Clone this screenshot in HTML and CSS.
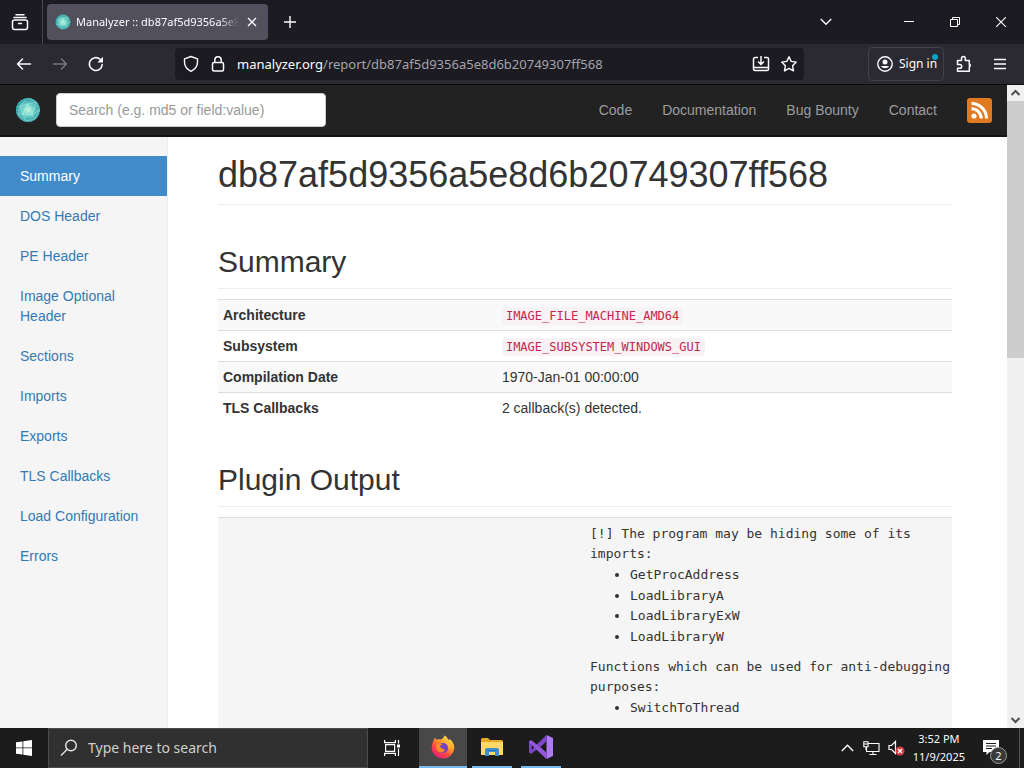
FILE: index.html
```html
<!DOCTYPE html>
<html lang="en">
<head>
<meta charset="utf-8">
<title>Manalyzer :: db87af5d9356a5e8d6b20749307ff568</title>
<link rel="stylesheet" href="styles.css">
</head>
<body>
<svg class="defs" width="0" height="0" aria-hidden="true">
  <defs>
    <radialGradient id="orb"><stop offset="0" stop-color="#c4f5da"/><stop offset=".5" stop-color="#6ad0c8"/><stop offset="1" stop-color="#2f979f"/></radialGradient>
    <symbol id="logo" viewBox="0 0 26 26">
      <circle cx="13" cy="13" r="12" fill="url(#orb)"/>
      <g fill="none" stroke="#d5fff0" stroke-opacity=".45" stroke-width=".8"><path d="M13 1 5 9l-2 8 8 7 9-2 4-9-3-8-8-4M5 9l8-2 8-2M5 9l3 8 3 7M3 17l5 0 9 1 3 4M13 7l4 11 7-5M13 7 8 17M21 5l-4 13"/></g>
      <circle cx="13" cy="13" r="11.500" fill="none" stroke="#52c2c4" stroke-dasharray="2 1.500"/>
    </symbol>
  </defs>
</svg>

<header class="tabs">
  <button class="icon-btn view-btn" aria-label="Firefox View"><svg width="18" height="18" viewBox="0 0 18 18" fill="none" stroke="#fbfbfe" stroke-width="1.500" stroke-linecap="round"><path d="M5 1.800h8M3 4.600h12"/><rect x="1.500" y="7" width="15" height="9.500" rx="2"/><path d="M7.500 10.500h3"/></svg></button>
  <div class="tab">
    <svg width="16" height="16"><use href="#logo"/></svg>
    <span class="tab-title">Manalyzer :: db87af5d9356a5e8</span>
    <button class="icon-btn tab-close" aria-label="Close tab"><svg width="10" height="10" viewBox="0 0 10 10" stroke="#fbfbfe" stroke-width="1.400"><path d="m1 1 8 8M9 1 1 9"/></svg></button>
  </div>
  <button class="icon-btn new-tab" aria-label="New tab"><svg width="12" height="12" viewBox="0 0 12 12" stroke="#fbfbfe" stroke-width="1.400"><path d="M6 0v12M0 6h12"/></svg></button>
  <div class="window-controls">
    <button class="icon-btn all-tabs" aria-label="List all tabs"><svg width="12" height="8" viewBox="0 0 12 8" fill="none" stroke="#fbfbfe" stroke-width="1.400"><path d="m.8 1 5.200 5.200L11.200 1"/></svg></button>
    <button class="icon-btn" aria-label="Minimize"><svg width="10" height="10" viewBox="0 0 10 10" stroke="#fff"><path d="M0 4.500h10"/></svg></button>
    <button class="icon-btn" aria-label="Restore"><svg width="10" height="10" viewBox="0 0 10 10" fill="none" stroke="#fff"><path d="M.5 2.500h7v7h-7zM2.500 2.500v-2h7v7h-2"/></svg></button>
    <button class="icon-btn" aria-label="Close"><svg width="10" height="10" viewBox="0 0 10 10" stroke="#fff" stroke-width="1.100"><path d="m0 0 10 10M10 0 0 10"/></svg></button>
  </div>
</header>

<div class="toolbar">
  <div class="nav-buttons">
    <button class="icon-btn" aria-label="Back"><svg width="16" height="16" viewBox="0 0 16 16" fill="none" stroke="#fbfbfe" stroke-width="1.500" stroke-linecap="round" stroke-linejoin="round"><path d="M14.500 8H1.500M6.500 3 1.500 8l5 5"/></svg></button>
    <button class="icon-btn" aria-label="Forward"><svg width="16" height="16" viewBox="0 0 16 16" fill="none" stroke="#77767e" stroke-width="1.500" stroke-linecap="round" stroke-linejoin="round"><path d="M1.500 8h13M9.500 3l5 5-5 5"/></svg></button>
    <button class="icon-btn" aria-label="Reload"><svg width="16" height="16" viewBox="0 0 16 16"><path d="M14.200 8.500A6.400 6.400 0 1 1 12 3.200" fill="none" stroke="#fbfbfe" stroke-width="1.600" stroke-linecap="round"/><path d="M15 .8v5.700H9.300z" fill="#fbfbfe"/></svg></button>
  </div>
  <div class="url-bar">
    <svg width="16" height="18" viewBox="0 0 16 18" fill="none" stroke="#fbfbfe" stroke-width="1.400" stroke-linejoin="round"><path d="m8 1.500 6.500 2.300v3.400c0 4-2.500 7-6.500 9.100-4-2.100-6.500-5.100-6.500-9.100V3.800z"/></svg>
    <svg width="14" height="18" viewBox="0 0 14 18" fill="none" stroke="#fbfbfe" stroke-width="1.500"><rect x="1.500" y="7.500" width="11" height="8.500" rx="1.500"/><path d="M3.800 7.500V5a3.200 3.200 0 0 1 6.400 0v2.500"/></svg>
    <span class="url"><span class="host">manalyzer.org</span>/report/db87af5d9356a5e8d6b20749307ff568</span>
    <button class="icon-btn" aria-label="Install"><svg width="18" height="16" viewBox="0 0 18 16" fill="none" stroke="#fbfbfe" stroke-width="1.500"><path d="M6 1.500H3A1.500 1.500 0 0 0 1.500 3v10A1.500 1.500 0 0 0 3 14.500h12a1.500 1.500 0 0 0 1.500-1.500V3A1.500 1.500 0 0 0 15 1.500h-3M9 0v8M6 5.500l3 3 3-3M2 11.500h14"/></svg></button>
    <button class="icon-btn" aria-label="Bookmark"><svg width="18" height="18" viewBox="0 0 18 18" fill="none" stroke="#fbfbfe" stroke-width="1.400" stroke-linejoin="round"><path d="m9 1.700 2.200 4.700 5.100.7-3.700 3.600.9 5.200L9 13.400l-4.500 2.500.9-5.200L1.700 7.100l5.100-.7z"/></svg></button>
  </div>
  <div class="tool-actions">
    <button class="sign-in"><svg width="16" height="16" viewBox="0 0 16 16"><circle cx="8" cy="8" r="7.200" fill="none" stroke="#fbfbfe" stroke-width="1.400"/><circle cx="8" cy="6" r="2.500" fill="#fbfbfe"/><path d="M3.800 10h8.400a5 5 0 0 1-8.400 0z" fill="#fbfbfe"/></svg>Sign in<span class="dot"></span></button>
    <button class="icon-btn" aria-label="Extensions"><svg width="16" height="18" viewBox="0 0 16 18" fill="none" stroke="#fbfbfe" stroke-width="1.500" stroke-linejoin="round"><path d="M1.500 8.500V5.500h4V3.400a1.900 1.900 0 0 1 3.800 0v2.100h4v4.200h.9v1.600h-.9v5H1.500v-3h2.300a1.900 1.900 0 0 0 0-3.800H1.500z"/></svg></button>
    <button class="icon-btn" aria-label="Menu"><svg width="12" height="12" viewBox="0 0 12 12" stroke="#fbfbfe" stroke-width="1.300"><path d="M0 1.500h12M0 6h12M0 10.500h12"/></svg></button>
  </div>
</div>

<div class="viewport">
  <div class="page">
    <nav class="navbar">
      <a href="#" class="brand" aria-label="Manalyzer"><svg width="26" height="26"><use href="#logo"/></svg></a>
      <input class="search" type="text" placeholder="Search (e.g. md5 or field:value)" aria-label="Search">
      <div class="nav-links">
        <a href="#">Code</a><a href="#">Documentation</a><a href="#">Bug Bounty</a><a href="#">Contact</a>
        <a href="#" class="rss" aria-label="RSS feed"><svg width="25" height="25" viewBox="0 0 25 25"><rect width="25" height="25" rx="3" fill="#e07a20"/><circle cx="7" cy="18" r="2.600" fill="#fff"/><path d="M4.500 10.700a9.800 9.800 0 0 1 9.800 9.800M4.500 5.500a15 15 0 0 1 15 15" fill="none" stroke="#fff" stroke-width="3"/></svg></a>
      </div>
    </nav>
    <div class="columns">
      <aside class="sidebar">
        <a href="#summary" class="active">Summary</a>
        <a href="#">DOS Header</a>
        <a href="#">PE Header</a>
        <a href="#">Image Optional Header</a>
        <a href="#">Sections</a>
        <a href="#">Imports</a>
        <a href="#">Exports</a>
        <a href="#">TLS Callbacks</a>
        <a href="#">Load Configuration</a>
        <a href="#">Errors</a>
      </aside>
      <main class="report">
        <h1>db87af5d9356a5e8d6b20749307ff568</h1>
        <h2 id="summary">Summary</h2>
        <table class="summary">
          <tr><th scope="row">Architecture</th><td><code>IMAGE_FILE_MACHINE_AMD64</code></td></tr>
          <tr><th scope="row">Subsystem</th><td><code>IMAGE_SUBSYSTEM_WINDOWS_GUI</code></td></tr>
          <tr><th scope="row">Compilation Date</th><td>1970-Jan-01 00:00:00</td></tr>
          <tr><th scope="row">TLS Callbacks</th><td>2 callback(s) detected.</td></tr>
        </table>
        <h2>Plugin Output</h2>
        <table class="plugins">
          <tr><td></td><td>
            <p>[!] The program may be hiding some of its imports:</p>
            <ul><li>GetProcAddress</li><li>LoadLibraryA</li><li>LoadLibraryExW</li><li>LoadLibraryW</li></ul>
            <p>Functions which can be used for anti-debugging purposes:</p>
            <ul><li>SwitchToThread</li></ul>
          </td></tr>
        </table>
      </main>
    </div>
  </div>
  <div class="scrollbar">
    <svg width="17" height="16" viewBox="0 0 17 16" fill="none" stroke="#505050" stroke-width="2"><path d="m4.500 10 4-4 4 4"/></svg>
    <div class="track"><div class="thumb"></div></div>
    <svg width="17" height="16" viewBox="0 0 17 16" fill="none" stroke="#505050" stroke-width="2"><path d="m4.500 6 4 4 4-4"/></svg>
  </div>
</div>

<footer class="taskbar">
  <button class="icon-btn start" aria-label="Start"><svg width="16" height="16" viewBox="0 0 16 16" fill="#fff"><path d="M0 2.300 6.500 1.400v6.100H0zM7.300 1.300 16 0v7.500H7.300zM0 8.300h6.500v6.300L0 13.700zM7.300 8.300H16V16l-8.700-1.300z"/></svg></button>
  <label class="task-search"><svg width="18" height="18" viewBox="0 0 18 18" fill="none" stroke="#e6e6e6" stroke-width="1.400"><circle cx="11" cy="6.500" r="5.300"/><path d="M7.200 10.300 1 16.500"/></svg><input type="text" placeholder="Type here to search" aria-label="Type here to search"></label>
  <button class="icon-btn task-view" aria-label="Task view"><svg width="17" height="16" viewBox="0 0 17 16" fill="none" stroke="#fff" stroke-width="1.200"><path d="M.6 0v2.600h10.800V0M.6 16v-2.600h10.800V16M1.600 4.600h9v6.800h-9zM14.500 0v3.500M14.500 8.500V16"/><path d="M13 4.500h3v3h-3z" fill="#fff" stroke="none"/></svg></button>
  <button class="app current" aria-label="Firefox"><svg width="24" height="24" viewBox="0 0 24 24">
    <defs><linearGradient id="fox" x1=".85" y1=".05" x2=".25" y2=".95"><stop offset="0" stop-color="#ffe94a"/><stop offset=".4" stop-color="#ff9a2b"/><stop offset=".7" stop-color="#ff4645"/><stop offset="1" stop-color="#e51f78"/></linearGradient></defs>
    <path d="M2.500 6c.3-1.800 1-2.800 1.600-3.400.2 1 .8 1.800 1.500 2.200 1.300-.5 2.800-.6 4-.2C11 3.800 13 3 13.500.5c2.500 1.300 3.600 3.500 4.200 4.800.5-.2.700-.8.700-1.500 3.300 2.400 4.900 5.700 4.900 9A11.300 11.300 0 0 1 12 23.500C5.700 23.500.7 18.600.7 12.500c0-2.500.7-4.700 1.800-6.500z" fill="url(#fox)"/>
    <circle cx="12" cy="13" r="5" fill="#7143c8"/><path d="M5.500 9.500c2-1.500 4.800-1.200 6.400.3-1.800 0-2.500.7-2.900 1.500.8 2.500 3.500 2.200 5 3.700-1.500 3-6 3-8 .2-1.100-1.600-1.300-3.900-.5-5.700z" fill="#ff8a26"/><path d="M13 7.500c3.500.5 5.500 3.500 4.500 7 2-1.600 2.500-5 .5-8z" fill="#ffbd35"/></svg></button>
  <button class="app" aria-label="File Explorer"><svg width="22" height="20" viewBox="0 0 22 20"><path d="M0 2.500Q0 1 1.500 1H7l2 2h11.500Q22 3 22 4.500V18H0z" fill="#e9a927"/><path d="M0 5h22v13H0z" fill="#ffd967"/><path d="M4 19v-6q0-2 2-2h10q2 0 2 2v6h-4v-4H8v4z" fill="#3f8fd2"/><path d="M6 13.500h10" stroke="#2670ad"/></svg></button>
  <button class="app" aria-label="Visual Studio"><svg width="24" height="24" viewBox="0 0 24 24"><path d="M17.500 0v24L24 21V3z" fill="#b07af0"/><path d="M17.500 0 7.800 9.500 2.200 5.200 0 6.200v11.600l2.200 1 5.600-4.300L17.500 24v-6.200L11.500 12l6-5.800zM2.700 9l2.800 3-2.800 3z" fill="#7d45c9" fill-rule="evenodd"/><path d="m2.200 5.200 15.300 12.600V24L0 7.400V6.200z" fill="#9259dc"/></svg></button>
  <div class="tray">
    <svg width="13" height="8" viewBox="0 0 13 8" fill="none" stroke="#fff" stroke-width="1.300"><path d="M.8 7 6.500 1.200 12.200 7"/></svg>
    <svg width="17" height="15" viewBox="0 0 17 15" fill="none" stroke="#fff" stroke-width="1.100"><path d="M5 2.500h11v8H3.500V6M6.500 13.500h7M10 10.500v3M.8.800h4.200v5H.8zM.8 3H5M3 6v3"/></svg>
    <svg width="17" height="16" viewBox="0 0 17 16"><path d="M1 5.500h2.500L7.500 1.500v12l-4-4H1z" fill="none" stroke="#fff" stroke-width="1.200"/><circle cx="12" cy="11" r="4.500" fill="#d93a42"/><path d="m10 9 4 4M14 9l-4 4" stroke="#fff" stroke-width="1.400"/></svg>
    <div class="clock"><span>3:52 PM</span><span>11/9/2025</span></div>
    <button class="icon-btn notices" aria-label="Notifications"><svg width="16" height="16" viewBox="0 0 16 16"><path d="M0 0h16v12H6.500L3.500 15v-3H0z" fill="#fff"/><path d="M3 3.500h10M3 6h10M3 8.500h6" stroke="#1c1c1c"/></svg><span class="count">2</span></button>
  </div>
</footer>
</body>
</html>
```
FILE: styles.css
```css
* { box-sizing: border-box; }

body {
  margin: 0;
  height: 100vh;
  display: flex;
  flex-direction: column;
  overflow: hidden;
  font-family: "Liberation Sans", Arial, sans-serif;
  font-size: 14px;
  line-height: 20px;
  color: #333;
}

.defs { position: absolute; }
svg { flex: none; display: block; }
a { text-decoration: none; }
button, input { font: inherit; }

button {
  border: 0;
  padding: 0;
  background: none;
  color: inherit;
}

.icon-btn {
  display: flex;
  align-items: center;
  justify-content: center;
  flex: none;
}

.tabs, .toolbar, .taskbar {
  flex: none;
  display: flex;
  font-family: "Noto Sans", "Open Sans", sans-serif;
  color: #fbfbfe;
}

/* Browser chrome */
.tabs {
  height: 44px;
  align-items: center;
  background: #1c1b22;
}

.view-btn {
  width: 43px;
  height: 44px;
  padding-right: 3px;
  border-right: 1px solid #46454d;
}

.tab {
  width: 221px;
  height: 36px;
  margin: 0 4px;
  padding: 0 8px;
  display: flex;
  align-items: center;
  gap: 5px;
  border-radius: 4px;
  background: #52505d;
  font-size: 11px;
}

.tab-title {
  flex: 1;
  min-width: 0;
  white-space: nowrap;
  mask-image: linear-gradient(to left, transparent, #000 20px);
}

.tab-close { width: 16px; }
.new-tab { width: 36px; height: 36px; }

.window-controls {
  margin-left: auto;
  display: flex;
}

.window-controls .icon-btn { width: 46px; height: 44px; }
.window-controls .all-tabs { width: 36px; margin-right: 42px; }

.toolbar {
  height: 41px;
  align-items: center;
  padding: 0 6px;
  background: #2b2a33;
  border-bottom: 1px solid #0c0c0d;
}

.nav-buttons { display: flex; }
.nav-buttons .icon-btn { width: 36px; height: 32px; }

.url-bar {
  flex: 1;
  min-width: 0;
  height: 32px;
  margin: 0 64px 0 61px;
  padding: 0 6px 0 8px;
  display: flex;
  align-items: center;
  gap: 12px;
  border-radius: 4px;
  background: #1c1b22;
}

.url {
  flex: 1;
  min-width: 0;
  overflow: hidden;
  white-space: nowrap;
  font-size: 13px;
  color: #a4a3aa;
}

.url-bar .icon-btn + .icon-btn { margin-left: -2px; }

.host { color: #fbfbfe; }

.tool-actions { display: flex; align-items: center; }
.tool-actions .icon-btn { width: 36px; height: 32px; }

.sign-in {
  position: relative;
  height: 34px;
  width: 76px;
  margin-right: 2px;
  padding-left: 8px;
  display: flex;
  align-items: center;
  gap: 6px;
  border: 1px solid #42414a;
  border-radius: 4px;
  font-size: 12px;
  white-space: nowrap;
}

.dot {
  position: absolute;
  top: 6px;
  right: 5px;
  width: 6px;
  height: 6px;
  border-radius: 50%;
  background: #00a5c8;
}

/* Web page */
.viewport {
  flex: 1;
  min-height: 0;
  display: flex;
  background: #fff;
}

.page {
  flex: 1;
  min-width: 0;
  display: flex;
  flex-direction: column;
}

.navbar {
  flex: none;
  min-height: 52px;
  padding: 0 15px;
  display: flex;
  align-items: center;
  gap: 15px;
  background: #222;
  border-bottom: 2px solid #141414;
}

.search {
  width: 270px;
  height: 34px;
  padding: 6px 12px;
  border: 1px solid #ccc;
  border-radius: 4px;
  background: #fff;
  color: #555;
}

.search::placeholder { color: #999; }

.nav-links {
  margin-left: auto;
  display: flex;
  align-items: center;
  gap: 30px;
}

.nav-links a { color: #9d9d9d; }

.columns {
  flex: 1;
  min-height: 0;
  display: flex;
}

.sidebar {
  flex: none;
  width: 168px;
  padding-top: 19px;
  background: #f5f5f5;
  border-right: 1px solid #eee;
}

.sidebar a {
  display: block;
  padding: 10px 20px;
  color: #337ab7;
}

.sidebar .active {
  background: #428bca;
  color: #fff;
}

.report {
  flex: 1;
  min-width: 0;
  padding: 18px 55px 0 50px;
  overflow: hidden;
}

h1, h2 {
  margin: 0;
  padding-bottom: 9px;
  border-bottom: 1px solid #eee;
  font-weight: 400;
}

h1 { font-size: 36px; line-height: 40px; }
h2 { margin: 40px 0 10px; font-size: 30px; line-height: 34px; }

table {
  width: 100%;
  table-layout: fixed;
  border-collapse: collapse;
}

th, td {
  padding: 5px;
  border-top: 1px solid #ddd;
  text-align: left;
  vertical-align: top;
}

.summary th { width: 38%; }
.summary tr:nth-child(odd) { background: #f9f9f9; }

code {
  padding: 2px 4px;
  border-radius: 4px;
  background: #f9f2f4;
  color: #c7254e;
  font-family: "DejaVu Sans Mono", monospace;
  font-size: 12px;
  line-height: 12px;
}

.plugins {
  background: #f5f5f5;
  font-family: "DejaVu Sans Mono", monospace;
  font-size: 13px;
}

.plugins td { padding: 6px 0 6px 5px; }
.plugins p { margin: 0; }
.plugins ul { margin: 1px 0 10px; padding-left: 40px; }
.plugins li:nth-child(odd) { margin-bottom: 1px; }

.scrollbar {
  flex: none;
  width: 17px;
  display: flex;
  flex-direction: column;
  background: #f0f0f0;
}

.track { flex: 1; }
.thumb { height: 42%; background: #cdcdcd; }

/* Desktop taskbar */
.taskbar {
  height: 40px;
  background: #1c1c1c;
}

.start { width: 48px; }

.task-search {
  width: 320px;
  padding: 0 11px;
  display: flex;
  align-items: center;
  gap: 10px;
  background: #303030;
  border: 1px solid #4c4c4c;
}

.task-search input {
  flex: 1;
  min-width: 0;
  padding: 0;
  border: 0;
  background: none;
  color: #fff;
  font-size: 14px;
}

.task-search input::placeholder { color: #cfcfcf; }

.task-view { width: 48px; margin-right: 3px; }

.app {
  width: 40px;
  margin-right: 9px;
  display: flex;
  align-items: center;
  justify-content: center;
  border-bottom: 2px solid #76b9ed;
}

.app.current {
  width: 48px;
  margin-right: 5px;
  background: #484848;
}

.tray {
  margin-left: auto;
  display: flex;
  align-items: center;
  gap: 9px;
}

.tray svg + svg { margin-right: -1px; }

.clock {
  display: flex;
  flex-direction: column;
  align-items: center;
  font-size: 11px;
  line-height: 18px;
}

.notices {
  position: relative;
  width: 46px;
  height: 40px;
  margin-right: 4px;
  padding-right: 12px;
  border-right: 1px solid #555;
}

.count {
  position: absolute;
  left: 16px;
  top: 19px;
  width: 17px;
  height: 17px;
  border: 1px solid #999;
  border-radius: 50%;
  background: #3a3a3a;
  font-size: 11px;
  line-height: 15px;
  text-align: center;
}
```
